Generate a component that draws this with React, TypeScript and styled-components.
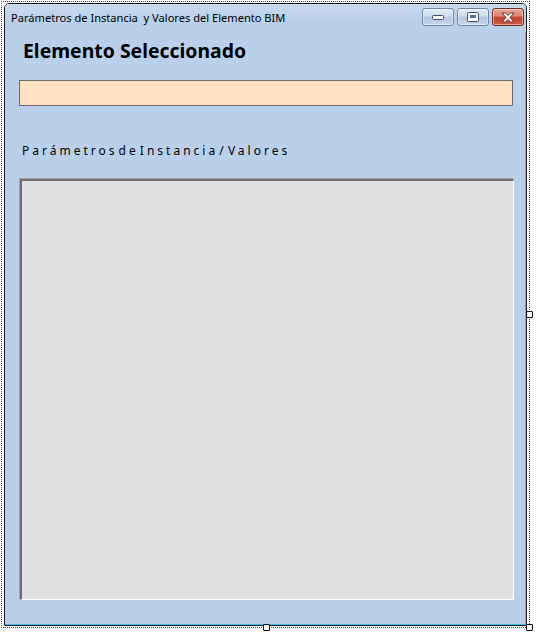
import React from 'react';
import styled, {createGlobalStyle} from 'styled-components';

const GlobalStyle = createGlobalStyle`
  html, body {
    margin: 0;
    background: #ffffff;
  }
  body {
    min-height: 638px;
    font-family: "Noto Sans", "Liberation Sans", sans-serif;
  }
`;

const Page = styled.div`
  padding: 1px 0 0 1px;
  height: 637px;
`;

const Frame = styled.div`
  position: relative;
  box-sizing: border-box;
  width: 529px;
  height: 627px;
  border: 1px dotted #4a4a4a;
`;

const Handle = styled.div<{$pos: 'right' | 'bottom' | 'corner'}>`
  position: absolute;
  box-sizing: border-box;
  width: 7px;
  height: 7px;
  background: #ffffff;
  border: 1px solid #000000;
  border-radius: 1px;
  ${p => p.$pos === 'right' && 'right: -4px; top: 309px;'}
  ${p => p.$pos === 'bottom' && 'left: 261px; bottom: -4px;'}
  ${p => p.$pos === 'corner' && 'right: -4px; bottom: -4px;'}
`;

const Form = styled.div`
  box-sizing: border-box;
  margin: 1px 0 0 2px;
  width: 523px;
  height: 623px;
  background: #bad0ea;
  border: 1px solid #1e1e1e;
  border-top-left-radius: 5px;
  border-top-right-radius: 5px;
  box-shadow: inset -1px -1px 0 #3cc4ea;
  display: flex;
  flex-direction: column;
`;

const TitleBar = styled.div`
  height: 28px;
  display: flex;
  align-items: flex-start;
  justify-content: space-between;
  background: linear-gradient(#c9dbf0, #bad0ea 60%);
  border-top-left-radius: 4px;
  border-top-right-radius: 4px;
`;

const Title = styled.div`
  margin: 6px 0 0 6px;
  font-family: "Noto Sans", sans-serif;
  font-size: 11.1px;
  line-height: 16px;
  color: #000000;
  white-space: pre;
`;

const Buttons = styled.div`
  display: flex;
  gap: 3px;
  margin: 4px 2px 0 0;
`;

const CapButton = styled.div<{$close?: boolean}>`
  box-sizing: border-box;
  width: 32px;
  height: 18px;
  border-radius: 3px;
  display: flex;
  align-items: center;
  justify-content: center;
  border: 1px solid ${p => (p.$close ? '#6e2b27' : '#6f86a6')};
  background: ${p =>
    p.$close
      ? 'linear-gradient(#e8a798 0%, #d9826f 45%, #c24633 50%, #cf5b45 100%)'
      : 'linear-gradient(#e4edf8 0%, #cfdcee 45%, #b3c7e0 50%, #c5d6eb 100%)'};
  box-shadow: inset 0 0 0 1px rgba(255, 255, 255, 0.45);
`;

const Client = styled.div`
  display: flex;
  flex-direction: column;
  align-items: flex-start;
`;

const Heading = styled.div`
  margin: 6px 0 0 18px;
  font-family: "Noto Sans", sans-serif;
  font-weight: 700;
  font-size: 19.4px;
  line-height: 26px;
  color: #000000;
`;

const TextBox = styled.div`
  box-sizing: border-box;
  margin: 16px 0 0 14px;
  width: 494px;
  height: 26px;
  background: #ffe0c0;
  border: 1px solid #6b6b6b;
`;

const Label = styled.div`
  margin: 37px 0 0 17px;
  font-family: "Noto Sans", sans-serif;
  font-size: 12px;
  line-height: 16px;
  letter-spacing: 3px;
  word-spacing: -5px;
  color: #000000;
`;

const ListBox = styled.div`
  box-sizing: border-box;
  margin: 20px 0 0 15px;
  width: 494px;
  height: 421px;
  background: #e0e0e0;
  border-top: 2px solid #6e6e6e;
  border-left: 2px solid #6e6e6e;
  border-right: 1px solid #ffffff;
  border-bottom: 1px solid #ffffff;
  box-shadow: -1px -1px 0 #a0a0a0;
`;

const MinIcon = () => (
  <svg width="12" height="6" viewBox="0 0 12 6">
    <rect x="0.5" y="1.5" width="11" height="4" rx="1" fill="#ffffff" stroke="#3b4c66" />
  </svg>
);

const MaxIcon = () => (
  <svg width="12" height="10" viewBox="0 0 12 10">
    <rect x="0.5" y="0.5" width="11" height="9" rx="1" fill="#ffffff" stroke="#3b4c66" />
    <rect x="3" y="3" width="6" height="3" fill="#5a6f90" />
  </svg>
);

const CloseIcon = () => (
  <svg width="14" height="11" viewBox="0 0 14 11">
    <path
      d="M1 1 L4.5 1 L7 3.6 L9.5 1 L13 1 L9 5.5 L13 10 L9.5 10 L7 7.4 L4.5 10 L1 10 L5 5.5 Z"
      fill="#ffffff"
      stroke="#5a2420"
      strokeWidth="0.9"
      strokeLinejoin="round"
    />
  </svg>
);

const App = () => (
  <Page>
    <GlobalStyle />
    <Frame>
      <Form>
        <TitleBar>
          <Title>Parámetros de Instancia  y Valores del Elemento BIM</Title>
          <Buttons>
            <CapButton><MinIcon /></CapButton>
            <CapButton><MaxIcon /></CapButton>
            <CapButton $close><CloseIcon /></CapButton>
          </Buttons>
        </TitleBar>
        <Client>
          <Heading>Elemento Seleccionado</Heading>
          <TextBox />
          <Label>Parámetros de Instancia / Valores</Label>
          <ListBox />
        </Client>
      </Form>
      <Handle $pos="right" />
      <Handle $pos="bottom" />
      <Handle $pos="corner" />
    </Frame>
  </Page>
);

export default App;
